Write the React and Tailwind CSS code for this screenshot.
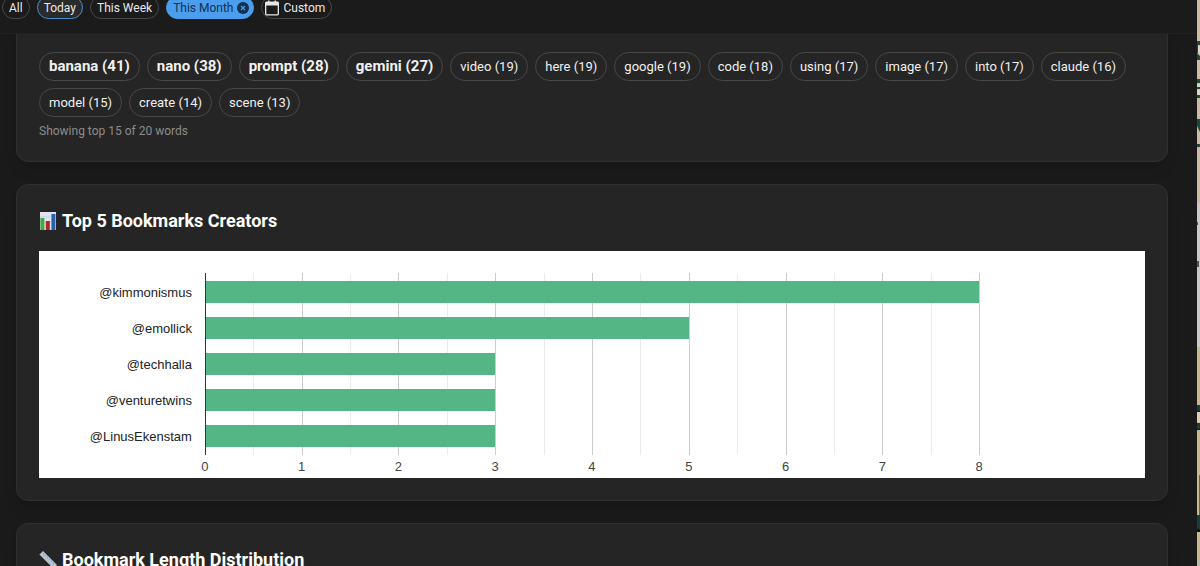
import { useState } from "react";

const RANGES = ["All", "Today", "This Week", "This Month"];

const WORDS = [
  { text: "banana", count: 41 },
  { text: "nano", count: 38 },
  { text: "prompt", count: 28 },
  { text: "gemini", count: 27 },
  { text: "video", count: 19 },
  { text: "here", count: 19 },
  { text: "google", count: 19 },
  { text: "code", count: 18 },
  { text: "using", count: 17 },
  { text: "image", count: 17 },
  { text: "into", count: 17 },
  { text: "claude", count: 16 },
  { text: "model", count: 15 },
  { text: "create", count: 14 },
  { text: "scene", count: 13 },
];

const CREATORS = [
  { name: "@kimmonismus", count: 8 },
  { name: "@emollick", count: 5 },
  { name: "@techhalla", count: 3 },
  { name: "@venturetwins", count: 3 },
  { name: "@LinusEkenstam", count: 3 },
];

const MAX = 8;
const TICKS = [0, 1, 2, 3, 4, 5, 6, 7, 8];
const HALF_TICKS = [0.5, 1.5, 2.5, 3.5, 4.5, 5.5, 6.5, 7.5];

const left = (v) => ({ left: `${(v / MAX) * 100}%` });

const ChartIcon = () => (
  <svg viewBox="0 0 18 20" className="h-5 w-[18px]" aria-hidden="true">
    <rect x="1" y="1" width="16" height="18" fill="#dde6f2" />
    <path d="M1 6h16M1 11h16" stroke="#bccbdd" strokeWidth="0.6" />
    <rect x="1.4" y="7" width="4" height="12" fill="#46a83f" />
    <rect x="6.8" y="10" width="4" height="9" fill="#b3242c" />
    <rect x="12.4" y="3" width="4" height="16" fill="#2c5fae" />
  </svg>
);

const RulerIcon = () => (
  <svg viewBox="0 0 18 20" className="h-5 w-[18px]" aria-hidden="true">
    <path d="M0.5 4.5 4 1 18 15l-3.5 3.5z" fill="#b4c3d1" />
    <path d="M0.5 4.5 14.5 18.5" stroke="#748596" strokeWidth="1" />
    <path d="m5.5 2.5-1.5 1.5m3.5.5L6 6m3.500.5L8 8m3.500.5L10 10m3.500.5L12 12m3.500.5L14 14" stroke="#7f91a3" strokeWidth="0.7" />
  </svg>
);

const CalendarIcon = () => (
  <svg viewBox="0 0 14 16" className="h-4 w-3.5" aria-hidden="true">
    <path d="M3 0.500h1.500v2H3zM9.500 0.500H11v2H9.500z" fill="#e8e8e8" />
    <rect x="0.700" y="2.200" width="12.600" height="12.600" rx="0.800" fill="none" stroke="#e8e8e8" strokeWidth="1.300" />
    <path d="M0.500 2h13v3.500h-13z" fill="#e8e8e8" />
  </svg>
);

const Card = ({ icon, title, className, children }) => (
  <section className={`rounded-xl border border-[#303030] bg-[#252525] px-[22px] shadow-lg ${className}`}>
    {title && (
      <h2 className="flex items-center gap-[5px] text-lg leading-6 font-bold text-white">
        {icon}
        {title}
      </h2>
    )}
    {children}
  </section>
);

const CreatorsChart = () => (
  <div className="mt-[18px] bg-white pt-[22px] font-['Liberation_Sans',Arial,sans-serif] text-[13px]">
    <div className="flex">
      <div className="w-[15%] shrink-0 pt-0.5 pr-[13px] text-right text-[#222]">
        {CREATORS.map((c) => (
          <div key={c.name} className="flex h-9 items-center justify-end">{c.name}</div>
        ))}
      </div>
      <div className="relative h-[182px] w-[70%]">
        {HALF_TICKS.map((t) => (
          <div key={t} className="absolute inset-y-0 w-px bg-[#ebebeb]" style={left(t)} />
        ))}
        {TICKS.map((t) => (
          <div key={t} className="absolute inset-y-0 w-px bg-[#ccc]" style={left(t)} />
        ))}
        <div className="relative pt-px">
          {CREATORS.map((c) => (
            <div key={c.name} className="flex h-9 items-center">
              <div className="h-[22px] bg-[#54b585]" style={{ width: `${(c.count / MAX) * 100}%` }} />
            </div>
          ))}
        </div>
        <div className="absolute inset-y-0 left-0 w-px bg-[#333]" />
      </div>
    </div>
    <div className="flex h-[23px]">
      <div className="w-[15%] shrink-0" />
      <div className="relative w-[70%] text-[#444]">
        {TICKS.map((t) => (
          <span key={t} className="absolute top-1 -translate-x-1/2 leading-4" style={left(t)}>{t}</span>
        ))}
      </div>
    </div>
  </div>
);

// sliver of the wallpaper behind the panel
const Wallpaper = () => (
  <svg viewBox="0 0 3 566" preserveAspectRatio="none" className="h-full w-[3px] shrink-0" aria-hidden="true">
    <rect width="3" height="203" fill="#cdbba3" />
    <rect y="203" width="3" height="144" fill="#c9c9cb" />
    <rect y="347" width="3" height="219" fill="#c8b88e" />
    <path d="M0 41h3v4H0zM0 45h1v8H0zM0 53l3 3v4H0zM0 79h3v4H0zM0 87h3v2H0zM0 95h3v3H0zM0 119h3v13l-3-6zM0 144h3v3H0z" fill="#1f4a3a" />
    <path d="M1 46h2v9l-2-4zM0 84h3v3H0zM0 90h3v5H0z" fill="#d9d6cc" />
    <path d="M0 222h1v3H0zM0 261h2v6H0z" fill="#55555a" />
    <path d="M0 405h3v6H0zM0 423h3v6H0zM0 515h3v14H0z" fill="#17403c" />
    <path d="M0 412h3v10H0z" fill="#d8d3b4" />
    <path d="M0 411h3v1H0zM0 429h3v1H0zM0 529h3v3H0z" fill="#111" />
    <path d="M2 475h1v40H2z" fill="#6b6746" />
    <path d="M0 562h3v4H0z" fill="#b9bab0" />
  </svg>
);

const App = () => {
  const [range, setRange] = useState("This Month");

  return (
    <div className="flex h-screen overflow-hidden bg-[#1a1a1a] font-[Roboto,sans-serif] text-white">
      <div className="min-w-0 flex-1">
        <header className="relative z-10 -mt-1 flex h-[38px] items-start gap-[7px] border-b border-[#222] bg-[#1b1b1b] pl-0.5">
          {RANGES.map((r) => (
            <button
              key={r}
              onClick={() => setRange(r)}
              className={`flex h-[23px] items-center gap-1 rounded-full border text-xs ${
                r === range
                  ? "border-[#4a9eed] bg-[#4a9eed] pr-1 pl-1.5 text-[#12314f]"
                  : r === "Today"
                    ? "border-[#4a8fd0] bg-[#2a2a2a] px-1.5 text-[#e8e8e8]"
                    : "border-[#484848] px-1.5 text-[#e8e8e8]"
              }`}
            >
              {r}
              {r === range && (
                <svg viewBox="0 0 12 12" className="h-3 w-3" aria-hidden="true">
                  <circle cx="6" cy="6" r="6" fill="#12314f" />
                  <path d="m4 4 4 4m0-4-4 4" stroke="#4a9eed" strokeWidth="1.300" />
                </svg>
              )}
            </button>
          ))}
          <button className="flex h-[23px] items-center gap-1 rounded-full border border-[#484848] pr-1.5 pl-[3px] text-xs text-[#e8e8e8]">
            <CalendarIcon />
            Custom
          </button>
        </header>

        <main className="pr-[29px] pl-4">
          <Card className="-mt-3 pt-[29px] pb-[22px]">
            <div className="flex flex-wrap gap-[7px]">
              {WORDS.map((w) => (
                <button
                  key={w.text}
                  className={`h-[29px] rounded-full border border-[#484848] px-[9px] text-[#f0f0f0] ${
                    w.count > 20 ? "text-[15px] font-bold" : "text-[13px]"
                  }`}
                >
                  {w.text} ({w.count})
                </button>
              ))}
            </div>
            <p className="mt-1.5 text-xs leading-4 text-[#8c8c8c]">Showing top 15 of 20 words</p>
          </Card>

          <Card icon={<ChartIcon />} title="Top 5 Bookmarks Creators" className="mt-[22px] pt-6 pb-[22px]">
            <CreatorsChart />
          </Card>

          <Card icon={<RulerIcon />} title="Bookmark Length Distribution" className="mt-[22px] h-80 pt-6" />
        </main>
      </div>

      <Wallpaper />
    </div>
  );
};

export default App;
